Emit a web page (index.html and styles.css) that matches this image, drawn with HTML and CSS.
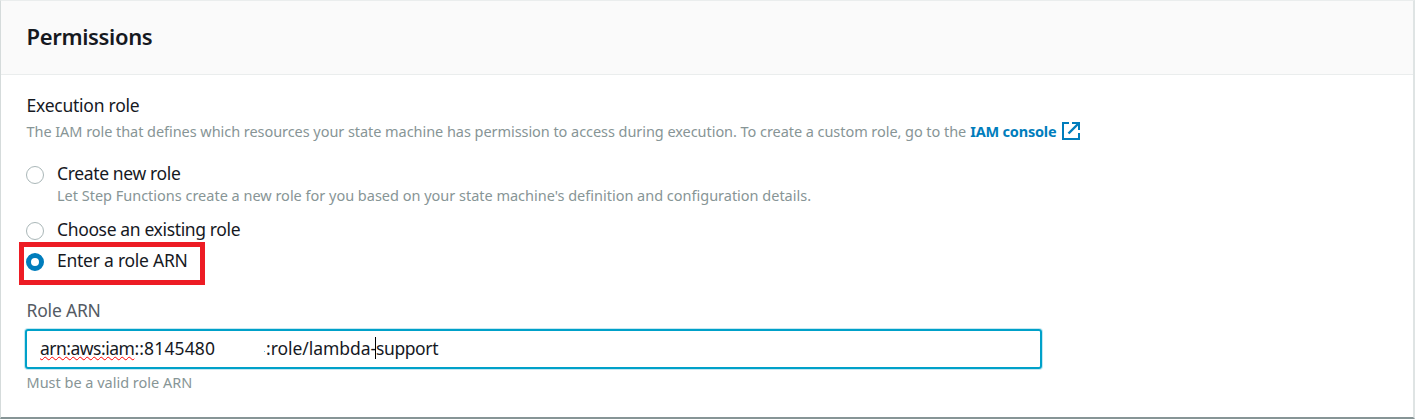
FILE: index.html
```html
<!DOCTYPE html>
<html lang="en">
<head>
<meta charset="utf-8">
<title>Permissions</title>
<link rel="stylesheet" href="styles.css">
</head>
<body>
<section class="panel">
  <header class="panel-header"><h2 class="title"><span>Permissions</span></h2></header>
  <div class="panel-body">
    <div class="label execution">Execution role</div>
    <div class="hint intro"><span class="intro-text">The IAM role that defines which resources your state machine has permission to access during execution. To create a custom role, go to the</span><a class="link"><span>IAM console</span><svg class="external" width="18" height="18" viewBox="0 0 18 18" fill="none" stroke="currentColor" stroke-width="2"><path d="M7 1H1v16h16v-6M10 1h7v7"/><path stroke-width="2.4" d="M17 1L6.5 11.5"/></svg></a></div>
    <div class="option option-create"><i class="radio"></i><div><div class="label">Create new role</div><div class="hint create-hint">Let Step Functions create a new role for you based on your state machine's definition and configuration details.</div></div></div>
    <div class="option option-choose"><i class="radio"></i><div class="label">Choose an existing role</div></div>
    <div class="option option-enter"><i class="radio checked"></i><div class="label enter">Enter a role ARN</div></div>
    <div class="label field-label">Role ARN</div>
    <div class="input"><span class="arn-start"><span class="misspelled">arn:aws:iam</span>::8145480</span><i class="speck"></i><span class="arn-role">:role/lambda-</span><i class="caret"></i><span class="arn-end">support</span></div>
    <div class="hint constraint">Must be a valid role ARN</div>
  </div>
</section>
</body>
</html>
```
FILE: styles.css
```css
* { box-sizing: border-box; }
body { margin: 0; background: #fff; font-family: "Noto Sans", "Open Sans", sans-serif; color: #16191f; }
.panel { height: 419px; width: 1415px; border: 1px solid #d5dbdb; border-top-color: #eaeded; border-right: 2px solid #dfe4e4; border-bottom: 2px solid #879596; }
.panel-header { height: 74px; padding: 19px 25px 0 25.5px; background: #fafafa; border-bottom: 1px solid #eaeded; }
.title { margin: 0; font-size: 22px; line-height: 32px; font-weight: 600; letter-spacing: -.35px; }
.panel-body { padding: 17px 25px 0; white-space: nowrap; }
.label { font-size: 17.5px; line-height: 26px; height: 26px; letter-spacing: -.36px; }
.execution { letter-spacing: -.25px; padding-left: .5px; }
.hint { font-size: 14.5px; line-height: 20px; height: 20px; color: #879596; letter-spacing: -.01px; }
.intro { margin-top: 3px; display: flex; padding-left: .5px; }
.intro-text { letter-spacing: -.055px; }
.link { display: flex; gap: 6px; margin-left: 4px; color: #007dbc; font-weight: 700; letter-spacing: -.2px; }
.external { display: block; margin-top: 1px; }
.option { display: flex; gap: 13px; }
.option-create { margin-top: 19px; height: 46px; }
.create-hint { margin-top: -1px; }
.option-choose { margin-top: 10px; height: 26px; }
.option-enter { margin-top: 5px; height: 26px; width: 186px; position: relative; }
.option-enter::after { content: ""; box-sizing: border-box; position: absolute; left: -7px; top: -5px; width: 186px; height: 43px; border: 5px solid #ed1c24; }
.enter { letter-spacing: -.25px; }
.radio { flex: none; width: 18px; height: 18px; margin-top: 6px; border: 1px solid #aab7b8; border-radius: 50%; }
.checked { border: 5px solid #007dbc; }
.field-label { margin-top: 24px; padding-left: .5px; color: #545b64; letter-spacing: -.2px; }
.input { display: flex; align-items: center; width: 1017px; height: 40px; margin: 6px 0 0 -1px; padding: 0 0 2px 13px; border: 2px solid #00a1c9; border-radius: 3px; box-shadow: 0 0 0 1px #c5e8f2; font-size: 17.5px; line-height: 26px; letter-spacing: -.4px; }
.arn-start { width: 224px; letter-spacing: .15px; }
.misspelled { letter-spacing: -.5px; text-decoration: underline wavy #f00 1px; text-underline-offset: 1px; text-decoration-skip-ink: none; }
.speck { width: 1px; height: 1px; margin: 7px 1px 0 0; background: #69b7dc; }
.arn-role { width: 109px; letter-spacing: -.05px; }
.caret { width: 1px; height: 22px; background: #000; }
.constraint { margin-top: 3px; padding-left: .5px; }
```
